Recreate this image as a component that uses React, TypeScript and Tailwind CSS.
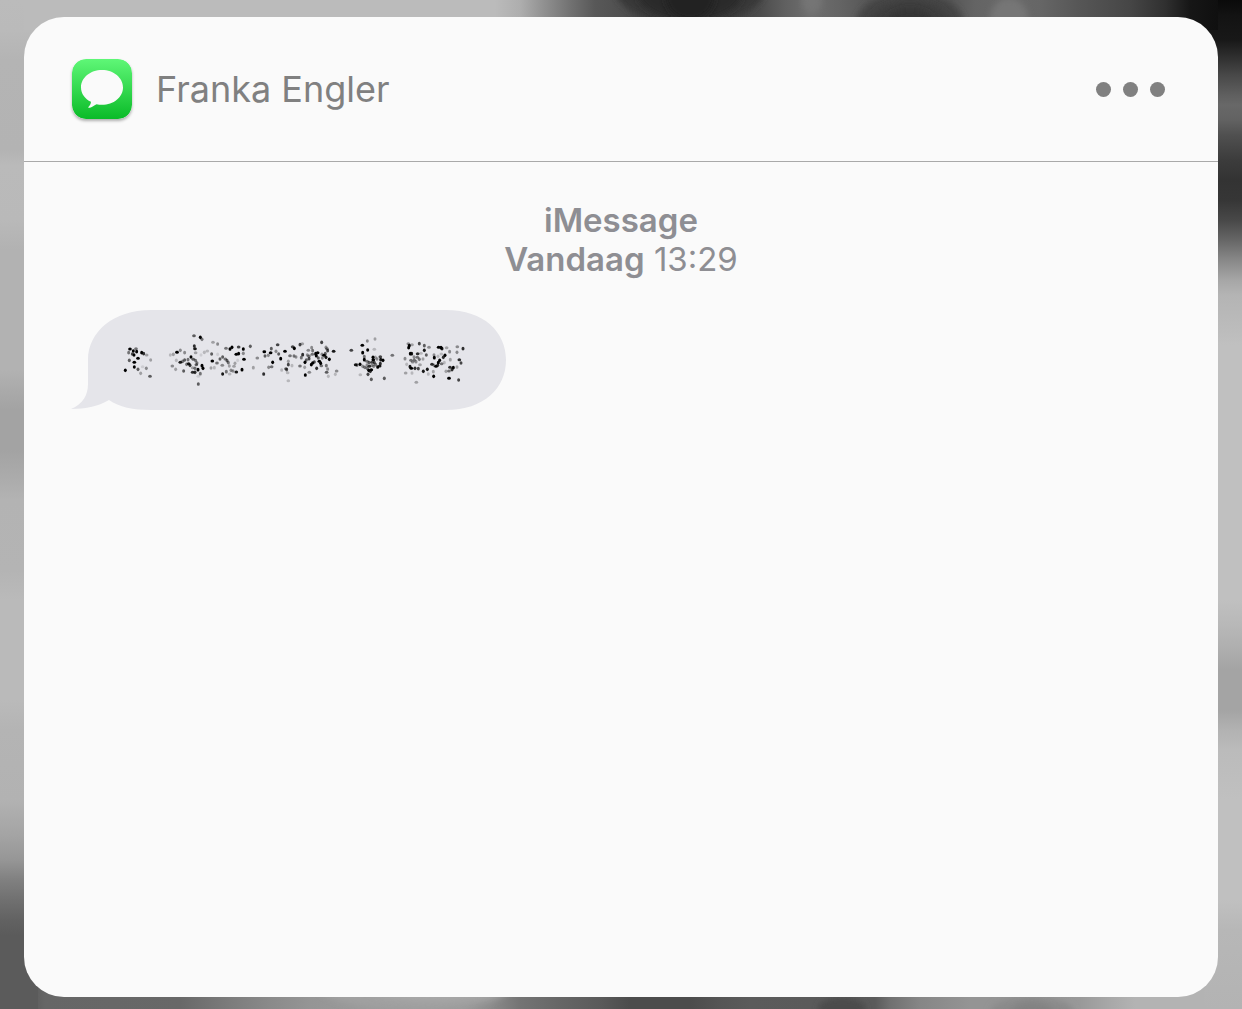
import React from 'react';

type Stop = [number, string];
type Dot = [number, number, number];

const LEFT: Stop[] = [
  [0, '#bbbbbb'], [30, '#bababa'], [60, '#b4b4b4'], [150, '#b3b3b3'], [165, '#bababa'], [220, '#b9b9b9'],
  [250, '#b2b2b2'], [370, '#b2b2b2'], [390, '#aaaaaa'], [410, '#a3a3a3'], [450, '#a3a3a3'], [480, '#acacac'],
  [500, '#b3b3b3'], [570, '#b4b4b4'], [600, '#bababa'], [700, '#bababa'], [730, '#b4b4b4'], [800, '#b2b2b2'],
  [835, '#a4a4a4'], [860, '#969696'], [880, '#808080'], [900, '#707070'], [920, '#626262'], [935, '#5b5b5b'],
  [1009, '#5b5b5b'],
];

const RIGHT: Stop[] = [
  [0, '#0a0a0a'], [16, '#131313'], [40, '#181818'], [60, '#333333'], [75, '#484848'], [95, '#5f5f5f'],
  [105, '#686868'], [120, '#626262'], [135, '#505050'], [160, '#3c3c3c'], [180, '#333333'], [200, '#363636'],
  [220, '#484848'], [240, '#666666'], [260, '#888888'], [280, '#a6a6a6'], [295, '#b4b4b4'], [330, '#bcbcbc'],
  [345, '#c0c0c0'], [600, '#c0c0c0'], [625, '#b8b8b8'], [650, '#aeaeae'], [670, '#a4a4a4'], [710, '#a4a4a4'],
  [730, '#b2b2b2'], [750, '#bbbbbb'], [800, '#c0c0c0'], [900, '#c0c0c0'], [930, '#b7b7b7'], [1009, '#b3b3b3'],
];

const TOP: Stop[] = [
  [0, '#bbbbbb'], [495, '#bbbbbb'], [520, '#aeaeae'], [540, '#959595'], [570, '#727272'], [595, '#585858'],
  [620, '#505050'], [650, '#444444'], [690, '#3c3c3c'], [730, '#424242'], [760, '#4c4c4c'], [785, '#606060'],
  [810, '#6e6e6e'], [840, '#646464'], [870, '#565656'], [910, '#4e4e4e'], [950, '#565656'], [975, '#646464'],
  [1010, '#696969'], [1040, '#666666'], [1080, '#565656'], [1130, '#464646'], [1165, '#303030'],
  [1190, '#161616'], [1242, '#0a0a0a'],
];

const BOTTOM: Stop[] = [
  [0, '#5b5b5b'], [35, '#5e5e5e'], [45, '#666666'], [180, '#686868'], [230, '#7c7c7c'], [270, '#8a8a8a'],
  [310, '#959595'], [360, '#9a9a9a'], [430, '#9c9c9c'], [465, '#9a9a9a'], [490, '#8c8c8c'], [520, '#747474'],
  [560, '#666666'], [600, '#5a5a5a'], [630, '#4c4c4c'], [690, '#4c4c4c'], [720, '#555555'], [750, '#5b5b5b'],
  [810, '#5a5a5a'], [875, '#5a5a5a'], [890, '#707070'], [920, '#868686'], [970, '#949494'],
  [1030, '#949494'], [1080, '#999999'], [1110, '#a8a8a8'], [1135, '#b3b3b3'], [1242, '#b3b3b3'],
];

// cx, cy, rx, ry, fill
const BLOBS: [number, number, number, number, string][] = [
  [690, -14, 76, 40, '#393939'],
  [690, -10, 54, 31, '#2c2c2c'],
  [690, -4, 25, 24, '#232323'],
  [910, 24, 54, 32, '#444444'],
  [910, 28, 42, 28, '#3c3c3c'],
  [910, 28, 26, 19, '#343434'],
  [812, 0, 10, 14, '#747474'],
  [1009, 20, 19, 22, '#767676'],
  [415, 988, 95, 21, '#a0a0a0'],
  [430, 988, 62, 13, '#a7a7a7'],
  [842, 1009, 24, 12, '#4c4c4c'],
  [1032, 1012, 42, 15, '#8a8a8a'],
  [1032, 1014, 22, 12, '#828282'],
];

// x, y and lightness (0 = solid black, 1 = invisible), in thirds of a pixel
const DUST: { x: number; y: number; dots: Dot[] }[] = [
  {
    x: -11,
    y: -10,
    dots: [
      [210, 147, 0], [220, 153, 0], [230, 155, 0], [228, 146, 0.5], [206, 158, 0.5], [222, 165, 0], [234, 175, 0],
      [245, 158, 0], [251, 161, 0.2], [260, 165, 0.7], [272, 180, 0.7], [208, 181, 0.4], [223, 187, 0],
      [223, 201, 0], [234, 208, 0.4], [248, 200, 0.9], [259, 205, 0.6], [242, 220, 0.7], [270, 229, 0.4],
      [196, 211, 0], [217, 162, 0.3], [402, 107, 0.4], [421, 112, 0], [426, 118, 0.5], [459, 127, 0.7],
      [473, 132, 0.6], [403, 138, 0.2], [405, 146, 0.1], [331, 165, 0.8], [340, 163, 0.7], [351, 157, 0],
      [361, 151, 0.6], [374, 158, 0.6], [407, 158, 0.7], [423, 165, 0.9], [433, 157, 0.8], [442, 153, 0.8],
      [455, 162, 0.4], [473, 163, 0.9], [498, 145, 0.5], [510, 147, 0], [516, 142, 0], [536, 141, 0.3],
      [550, 147, 0], [571, 139, 0.4], [529, 163, 0], [536, 161, 0], [550, 160, 0.6], [552, 178, 0], [393, 171, 0],
      [384, 179, 0.5], [400, 178, 0.4], [407, 182, 0.5], [374, 180, 0.4], [361, 187, 0.1], [368, 184, 0.5],
      [349, 181, 0.8], [337, 198, 0.6], [347, 208, 0.7], [371, 213, 0.4], [386, 191, 0.1], [390, 196, 0.2],
      [380, 193, 0.5], [409, 194, 0.4], [426, 197, 0], [429, 205, 0], [398, 203, 0.7], [405, 205, 0.5],
      [414, 209, 0], [398, 217, 0.2], [405, 217, 0.2], [421, 221, 0.5], [415, 229, 0.9], [415, 252, 0.4],
      [411, 189, 0.5], [457, 183, 0], [463, 203, 0.8], [453, 204, 0.7], [471, 189, 0.5], [480, 177, 0.4],
      [488, 171, 0.4], [496, 177, 0.5], [501, 182, 0.4], [505, 188, 0.5], [487, 196, 0.6], [508, 198, 0.7],
      [525, 190, 0.7], [522, 199, 0.7], [488, 222, 0.1], [499, 215, 0.5], [509, 222, 0.8], [513, 211, 0.6],
      [519, 213, 0.6], [529, 216, 0.1], [546, 209, 0], [533, 181, 0.9], [592, 174, 0.6], [580, 203, 0.7],
    ],
  },
  {
    x: 154,
    y: 15,
    dots: [
      [118, 80, 0], [120, 93, 0.4], [130, 91, 0.6], [137, 83, 0], [139, 71, 0.4], [153, 79, 0.6], [158, 59, 0.3],
      [161, 87, 0.4], [167, 101, 0], [180, 79, 0], [143, 112, 0], [131, 127, 0.6], [140, 125, 0.5],
      [116, 147, 0.2], [170, 135, 0.8], [183, 131, 0.4], [185, 134, 0.4], [190, 119, 0.3], [188, 143, 0.8],
      [201, 122, 0.8], [190, 109, 0.7], [195, 92, 0.5], [207, 93, 0.5], [213, 96, 0.6], [203, 65, 0.3],
      [208, 70, 0], [225, 59, 0.3], [232, 56, 0.7], [233, 89, 0.2], [229, 98, 0.5], [190, 167, 0.8], [241, 150, 0],
      [239, 127, 0.7], [225, 123, 0.5], [240, 112, 0], [244, 105, 0.4], [250, 76, 0.6], [260, 68, 0.6],
      [247, 90, 0.6], [252, 93, 0.5], [252, 101, 0.3], [263, 77, 0.5], [262, 88, 0.5], [259, 119, 0],
      [263, 114, 0], [253, 142, 0.6], [268, 111, 0.3], [272, 86, 0], [278, 83, 0], [274, 92, 0], [280, 99, 0.4],
      [283, 109, 0], [287, 115, 0], [275, 130, 0.2], [289, 122, 0.5], [290, 52, 0.3], [303, 67, 0.6],
      [306, 71, 0.5], [308, 77, 0.3], [291, 88, 0.6], [297, 91, 0], [303, 97, 0.1], [313, 103, 0], [326, 79, 0.1],
      [304, 122, 0.5], [308, 132, 0.6], [305, 142, 0.4], [310, 154, 0.8], [331, 148, 0.8], [335, 138, 0.6],
      [301, 86, 0.4], [292, 99, 0.6],
    ],
  },
  {
    x: 269,
    y: 15,
    dots: [
      [34, 76, 0.3], [82, 48, 0.6], [105, 42, 0.7], [67, 61, 0], [68, 83, 0], [83, 75, 0], [103, 73, 0.8],
      [73, 95, 0.5], [73, 104, 0], [47, 119, 0.1], [60, 118, 0], [51, 120, 0.4], [81, 109, 0.5], [87, 113, 0.4],
      [99, 97, 0], [100, 104, 0], [106, 97, 0.7], [111, 102, 0.6], [121, 95, 0.3], [122, 104, 0.1], [129, 106, 0],
      [96, 112, 0.3], [103, 113, 0.3], [81, 120, 0.6], [88, 124, 0.2], [74, 127, 0.5], [81, 130, 0.5],
      [96, 121, 0.6], [101, 124, 0.6], [113, 126, 0], [119, 123, 0.1], [121, 116, 0.2], [86, 136, 0],
      [94, 134, 0], [91, 139, 0.2], [84, 148, 0.3], [61, 149, 0.8], [94, 163, 0.4], [133, 160, 0.4],
      [157, 91, 0.5], [107, 119, 0.5], [68, 124, 0.6], [205, 56, 0.6], [208, 62, 0], [206, 68, 0],
      [216, 59, 0.7], [238, 56, 0.3], [253, 62, 0.4], [267, 67, 0.6], [253, 76, 0.1], [259, 90, 0.4],
      [243, 85, 0.8], [211, 86, 0], [215, 86, 0.1], [233, 86, 0.2], [195, 101, 0.6], [222, 96, 0.6],
      [232, 97, 0.5], [238, 103, 0.5], [249, 102, 0.7], [213, 106, 0.5], [223, 105, 0.5], [228, 110, 0.6],
      [218, 111, 0.6], [200, 118, 0.8], [210, 125, 0.1], [214, 130, 0], [225, 130, 0.2], [235, 131, 0.3],
      [240, 119, 0.7], [250, 139, 0.1], [262, 133, 0.1], [197, 144, 0.7], [216, 144, 0.8], [265, 147, 0.8],
      [229, 172, 0.7], [281, 154, 0], [280, 140, 0.7], [276, 118, 0.2], [283, 98, 0], [282, 90, 0.6],
      [296, 67, 0], [303, 68, 0], [306, 71, 0.1], [320, 68, 0.7], [315, 91, 0], [310, 97, 0.2], [304, 87, 0.8],
      [299, 106, 0], [295, 113, 0], [288, 124, 0], [293, 121, 0.2], [282, 121, 0.6], [305, 116, 0.5],
      [313, 113, 0.8], [329, 80, 0.6], [352, 65, 0.6], [351, 82, 0.6], [369, 71, 0.2], [358, 104, 0.2],
      [363, 114, 0.3], [331, 104, 0.7], [330, 127, 0.2], [340, 128, 0], [336, 134, 0.2], [327, 138, 0.5],
      [351, 126, 0.7], [318, 139, 0.7], [327, 160, 0], [356, 165, 0.3], [294, 94, 0.8],
    ],
  },
];

export default function App() {
  return (
    <div className="relative isolate flex min-h-screen flex-col px-6 pt-[17px] pb-3 font-['Inter',sans-serif]">
      <Backdrop />
      <main className="flex grow flex-col overflow-hidden rounded-[40px] bg-[#fafafa]">
        <header className="flex h-[145px] items-center gap-6 border-b border-[#a9a9a9] pr-[53px] pl-12">
          <MessagesIcon />
          <h1 className="grow text-4xl text-[#808080]">Franka Engler</h1>
          <button type="button" aria-label="Opties" className="flex gap-3">
            <span className="size-[15px] rounded-full bg-[#808080]" />
            <span className="size-[15px] rounded-full bg-[#808080]" />
            <span className="size-[15px] rounded-full bg-[#808080]" />
          </button>
        </header>

        <section className="px-12 pt-[39px]">
          <div className="text-center text-[33px] leading-[39px] text-[#8e8e93]">
            <p className="font-semibold">iMessage</p>
            <p>
              <span className="font-semibold">Vandaag</span> <time>13:29</time>
            </p>
          </div>
          <InvisibleInkBubble />
        </section>
      </main>
    </div>
  );
}

function MessagesIcon() {
  return (
    <svg viewBox="0 0 60 60" className="size-[60px] shrink-0 rounded-[14px] shadow-[0_2px_3px_rgba(0,0,0,0.3)]" aria-hidden="true">
      <defs>
        <linearGradient id="green" x1="0" y1="0" x2="0" y2="1">
          <stop offset="0" stopColor="#5ff777" />
          <stop offset="1" stopColor="#0abb28" />
        </linearGradient>
      </defs>
      <rect width="60" height="60" rx="14" fill="url(#green)" />
      <path
        d="M30 11C18.3 11 9 18.7 9 28.4C9 34.4 12.8 39.7 19 42.8C18.9 45 17.8 46.8 16.2 48.2C16.2 48.9 17 49 18 48.7C20.6 47.9 22.6 46.2 24.6 45.2C26.4 45.6 28.1 45.8 30 45.8C41.6 45.8 51 38 51 28.4C51 18.7 41.6 11 30 11Z"
        fill="#fafafa"
      />
    </svg>
  );
}

function InvisibleInkBubble() {
  return (
    <svg viewBox="0 0 435 100" className="mt-[31px] -ml-px h-[100px] w-[435px]" role="img" aria-label="Bericht in onzichtbare inkt">
      <path
        d="M80 0H375C413 0 435 22 435 50S413 100 375 100H80C62 100 48 97 38 90C28 96 15 99 0 99C12 94 17 85 17 74V50C17 22 42 0 80 0Z"
        fill="#e5e5ea"
      />
      {DUST.map(cloud => (
        <g key={cloud.x} transform={`translate(${cloud.x} ${cloud.y}) scale(0.3333)`}>
          {cloud.dots.map(([x, y, light], i) => (
            <ellipse key={i} cx={x} cy={y} rx={i % 3 === 0 ? 5.5 : 4.5} ry={i % 3 === 0 ? 4.5 : 5.5} fillOpacity={1 - light} />
          ))}
        </g>
      ))}
    </svg>
  );
}

// Blurred grey wallpaper, only its rim shows around the card
function Backdrop() {
  return (
    <svg
      viewBox="0 0 1242 1009"
      preserveAspectRatio="none"
      className="absolute inset-0 -z-10 h-full w-full"
      aria-hidden="true"
    >
      <defs>
        <Fade id="left" stops={LEFT} length={1009} vertical />
        <Fade id="right" stops={RIGHT} length={1009} vertical />
        <Fade id="top" stops={TOP} length={1242} />
        <Fade id="bottom" stops={BOTTOM} length={1242} />
        <filter id="soften" x="-20%" y="-20%" width="140%" height="140%">
          <feGaussianBlur stdDeviation="3" />
        </filter>
      </defs>
      <rect width="621" height="1009" fill="url(#left)" />
      <rect x="621" width="621" height="1009" fill="url(#right)" />
      <rect x="24" width="1194" height="30" fill="url(#top)" />
      <rect x="38" y="982" width="1166" height="27" fill="url(#bottom)" />
      {BLOBS.map(([cx, cy, rx, ry, fill], i) => (
        <ellipse key={i} cx={cx} cy={cy} rx={rx} ry={ry} fill={fill} filter="url(#soften)" />
      ))}
    </svg>
  );
}

function Fade({ id, stops, length, vertical }: { id: string; stops: Stop[]; length: number; vertical?: boolean }) {
  return (
    <linearGradient id={id} gradientUnits="userSpaceOnUse" x1="0" y1="0" x2={vertical ? 0 : length} y2={vertical ? length : 0}>
      {stops.map(([at, color]) => (
        <stop key={at} offset={at / length} stopColor={color} />
      ))}
    </linearGradient>
  );
}
